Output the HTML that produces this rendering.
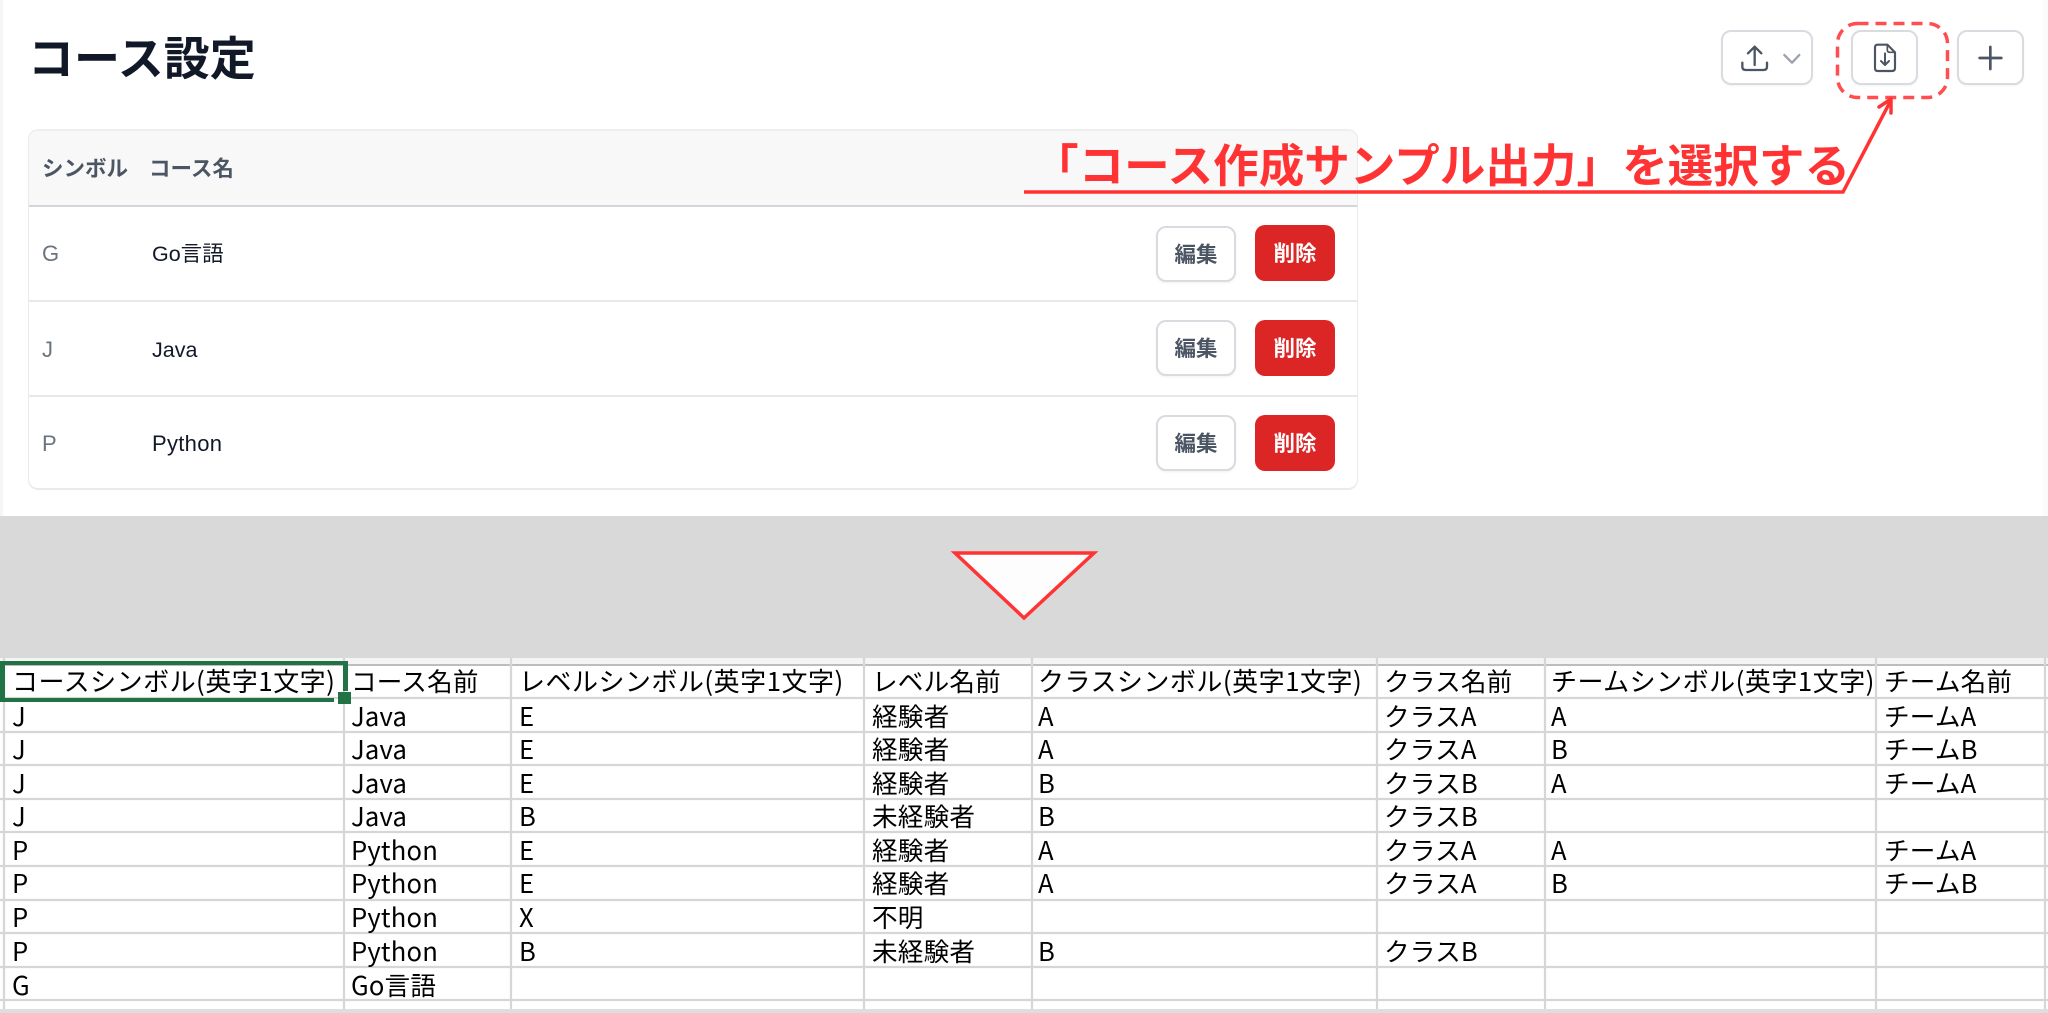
<!DOCTYPE html>
<html lang="ja"><head><meta charset="utf-8"><title>コース設定</title>
<style>
html,body{margin:0;padding:0;background:#fff}
body{width:2048px;height:1013px;position:relative;overflow:hidden;font-family:"Liberation Sans","Noto Sans CJK JP",sans-serif}
.a{position:absolute;white-space:nowrap}
h1{position:absolute;margin:0;left:28px;top:29px;font-size:46px;line-height:55px;font-weight:700;color:#111827;white-space:nowrap;font-family:"Noto Sans CJK JP",sans-serif}
.card{position:absolute;left:28px;top:129px;width:1330px;height:361px;box-sizing:border-box;border:1px solid #e9eaed;border-top:2px solid #eceef0;border-bottom:2px solid #e9eaed;border-radius:10px;background:#fff;overflow:hidden}
.hd{position:absolute;left:0;top:0;right:0;height:74px;background:#f8f8f9;border-bottom:2px solid #d2d6db}
.ln{position:absolute;left:0;right:0;height:2px;background:#e7e8eb}
.th{font-size:21.5px;font-weight:700;color:#4b5563;line-height:30px;font-family:"Noto Sans CJK JP",sans-serif}
.sym{font-size:22px;color:#6b7280;line-height:30px}
.nm{font-size:21.5px;color:#111827;line-height:30px;font-family:"Liberation Sans","Noto Sans CJK JP",sans-serif}
.btn{position:absolute;box-sizing:border-box;border-radius:10px;text-align:center;font-size:21.5px;font-weight:700;font-family:"Noto Sans CJK JP",sans-serif;width:80px;height:56px;line-height:52px}
.e{left:1156px;background:#fff;border:2px solid #d8dbe0;color:#4b5563;box-shadow:0 1px 2px rgba(0,0,0,.06)}
.d{left:1255px;background:#dc2626;color:#fff;line-height:56px}
.tb{position:absolute;top:30px;height:55px;box-sizing:border-box;border:2px solid #d8dbe0;border-radius:10px;background:#fff;box-shadow:0 1px 2px rgba(0,0,0,.05)}
.note{position:absolute;left:1033px;top:133px;font-size:45.6px;line-height:60px;font-weight:700;color:#ff3333;white-space:nowrap;font-family:"Noto Sans CJK JP",sans-serif}
.band{position:absolute;left:0;top:516px;width:2048px;height:142px;background:#d9d9d9}
.edge{position:absolute;top:0;width:3px;height:516px;background:#f6f6f6}
.sheet{position:absolute;left:0;top:658px;width:2048px;height:355px;background:#fff}
.v{position:absolute;width:2px;top:658px;height:351px;background:#d6d6d6;box-shadow:0 0 1px #dcdcdc}
.h{position:absolute;left:0;width:2048px;height:2px;background:#d6d6d6;box-shadow:0 0 1px #dcdcdc}
.c{position:absolute;font-size:25.6px;letter-spacing:.2px;line-height:34px;color:#000;white-space:nowrap;font-family:"Noto Sans CJK JP",sans-serif}
.l{font-size:26px;letter-spacing:.48px}
.c1{left:12px}.c2{left:351px}.c3{left:519px}.c4{left:872px}.c5{left:1038px}.c6{left:1384px}.c7{left:1551px}.c8{left:1884px}
.g{position:absolute;background:#217346}
</style></head><body>

<div class="edge" style="left:0"></div>
<div class="edge" style="right:0;width:5px;background:#fbfbfb"></div>

<h1>コース設定</h1>

<div class="card">
  <div class="hd"></div>
  <div class="ln" style="top:169px"></div>
  <div class="ln" style="top:264px"></div>
  <span class="a th" style="left:13px;top:22px">シンボル</span>
  <span class="a th" style="left:120px;top:22px">コース名</span>
  <span class="a sym" style="top:108px;left:13px">G</span>
  <span class="a nm" style="top:108px;left:123px">Go言語</span>
  <span class="a sym" style="top:204px;left:13px">J</span>
  <span class="a nm" style="top:204px;left:123px">Java</span>
  <span class="a sym" style="top:298px;left:13px">P</span>
  <span class="a nm" style="top:298px;left:123px;font-size:22px;letter-spacing:.3px">Python</span>
</div>

<div class="btn e" style="top:226px">編集</div><div class="btn d" style="top:225px">削除</div>
<div class="btn e" style="top:320px">編集</div><div class="btn d" style="top:320px">削除</div>
<div class="btn e" style="top:415px">編集</div><div class="btn d" style="top:415px">削除</div>

<div class="tb" style="left:1721px;width:92px"></div>
<div class="tb" style="left:1851px;width:67px"></div>
<div class="tb" style="left:1957px;width:67px"></div>

<div class="note">「コース作成サンプル出力」を選択する</div>

<div class="band"></div>

<div class="sheet"></div>
<div class="a" style="left:0;top:658px;width:2048px;height:7px;background:#f4f4f4"></div>
<div class="a" style="left:0;top:664px;width:2048px;height:2px;background:#bdbdbd"></div>
<div class="a" style="left:0;top:1009px;width:2048px;height:4px;background:#dedede"></div>

<div class="h" style="top:697px"></div><div class="h" style="top:731px"></div><div class="h" style="top:764px"></div><div class="h" style="top:798px"></div><div class="h" style="top:831px"></div><div class="h" style="top:865px"></div><div class="h" style="top:899px"></div><div class="h" style="top:932px"></div><div class="h" style="top:966px"></div><div class="h" style="top:999px"></div>
<div class="v" style="left:3px"></div><div class="v" style="left:343px"></div><div class="v" style="left:510px"></div><div class="v" style="left:863px"></div><div class="v" style="left:1031px"></div><div class="v" style="left:1376px"></div><div class="v" style="left:1544px"></div><div class="v" style="left:1875px"></div><div class="v" style="left:2044px"></div>

<div class="c c1 l" style="top:664px">コースシンボル(英字1文字)</div><div class="c c2" style="top:664px">コース名前</div><div class="c c3 l" style="top:664px">レベルシンボル(英字1文字)</div><div class="c c4" style="top:664px">レベル名前</div><div class="c c5 l" style="top:664px">クラスシンボル(英字1文字)</div><div class="c c6" style="top:664px">クラス名前</div><div class="c c7 l" style="top:664px">チームシンボル(英字1文字)</div><div class="c c8" style="top:664px">チーム名前</div>

<div class="c c1" style="top:699px">J</div><div class="c c2" style="top:699px">Java</div><div class="c c3" style="top:699px">E</div><div class="c c4" style="top:699px">経験者</div><div class="c c5" style="top:699px">A</div><div class="c c6" style="top:699px">クラスA</div><div class="c c7" style="top:699px">A</div><div class="c c8" style="top:699px">チームA</div>

<div class="c c1" style="top:732px">J</div><div class="c c2" style="top:732px">Java</div><div class="c c3" style="top:732px">E</div><div class="c c4" style="top:732px">経験者</div><div class="c c5" style="top:732px">A</div><div class="c c6" style="top:732px">クラスA</div><div class="c c7" style="top:732px">B</div><div class="c c8" style="top:732px">チームB</div>

<div class="c c1" style="top:766px">J</div><div class="c c2" style="top:766px">Java</div><div class="c c3" style="top:766px">E</div><div class="c c4" style="top:766px">経験者</div><div class="c c5" style="top:766px">B</div><div class="c c6" style="top:766px">クラスB</div><div class="c c7" style="top:766px">A</div><div class="c c8" style="top:766px">チームA</div>

<div class="c c1" style="top:799px">J</div><div class="c c2" style="top:799px">Java</div><div class="c c3" style="top:799px">B</div><div class="c c4" style="top:799px">未経験者</div><div class="c c5" style="top:799px">B</div><div class="c c6" style="top:799px">クラスB</div>

<div class="c c1" style="top:833px">P</div><div class="c c2" style="top:833px">Python</div><div class="c c3" style="top:833px">E</div><div class="c c4" style="top:833px">経験者</div><div class="c c5" style="top:833px">A</div><div class="c c6" style="top:833px">クラスA</div><div class="c c7" style="top:833px">A</div><div class="c c8" style="top:833px">チームA</div>

<div class="c c1" style="top:866px">P</div><div class="c c2" style="top:866px">Python</div><div class="c c3" style="top:866px">E</div><div class="c c4" style="top:866px">経験者</div><div class="c c5" style="top:866px">A</div><div class="c c6" style="top:866px">クラスA</div><div class="c c7" style="top:866px">B</div><div class="c c8" style="top:866px">チームB</div>

<div class="c c1" style="top:900px">P</div><div class="c c2" style="top:900px">Python</div><div class="c c3" style="top:900px">X</div><div class="c c4" style="top:900px">不明</div>

<div class="c c1" style="top:934px">P</div><div class="c c2" style="top:934px">Python</div><div class="c c3" style="top:934px">B</div><div class="c c4" style="top:934px">未経験者</div><div class="c c5" style="top:934px">B</div><div class="c c6" style="top:934px">クラスB</div>

<div class="c c1" style="top:968px">G</div><div class="c c2" style="top:968px">Go言語</div>

<div class="g" style="left:0;top:661px;width:348px;height:4px"></div>
<div class="g" style="left:0;top:698px;width:334px;height:4px"></div>
<div class="g" style="left:0;top:661px;width:5px;height:41px"></div>
<div class="g" style="left:343px;top:661px;width:5px;height:30px"></div>
<div class="g" style="left:338px;top:692px;width:13px;height:12px"></div>

<svg class="a" style="left:0;top:0" width="2048" height="1013" viewBox="0 0 2048 1013" fill="none">
  <g transform="translate(1680 10) scale(.33333)" stroke-linecap="round" stroke-linejoin="round">
    <path d="M224 165V110M204 130L224 110L244 130" stroke="#4b5563" stroke-width="7"/>
    <path d="M187 158V170Q187 180 197 180H251Q261 180 261 170V158" stroke="#4b5563" stroke-width="7"/>
    <path d="M313 135L336 158L358 135" stroke="#9ca3af" stroke-width="7"/>
    <path d="M593 104H622L645 127V174Q645 183 636 183H593Q585 183 585 174V112Q585 104 593 104Z" stroke="#4b5563" stroke-width="6.5"/>
    <path d="M622 104V120Q622 127 630 127H645" stroke="#4b5563" stroke-width="5"/>
    <path d="M615 130V165M603 153L615 165L627 153" stroke="#4b5563" stroke-width="6"/>
    <path d="M899 144H964M931 111V177" stroke="#4b5563" stroke-width="8"/>
  </g>
  <rect x="1837.5" y="23.5" width="110" height="74" rx="20" stroke="#ff4d50" stroke-width="3.5" stroke-dasharray="11 7"/>
  <path d="M1024 192H1843L1890 102" stroke="#ff3333" stroke-width="3.5"/>
  <path d="M1879 107L1891 99L1891 113" stroke="#ff3333" stroke-width="3.5" stroke-linecap="round" stroke-linejoin="round"/>
  <path d="M955 553H1094L1024 618Z" fill="#fdfdfd" stroke="#ff3333" stroke-width="3.5"/>
</svg>
</body></html>
